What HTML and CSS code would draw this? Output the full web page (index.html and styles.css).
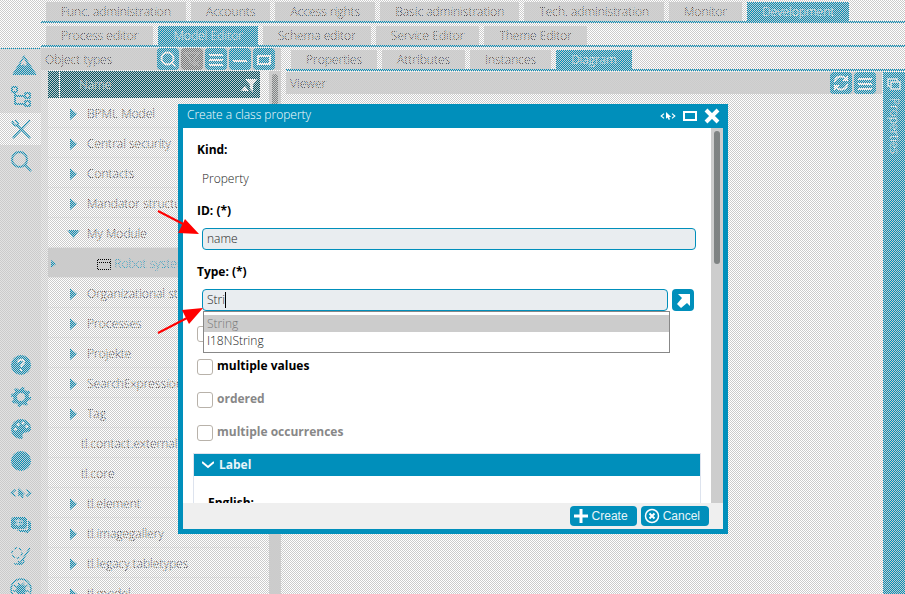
FILE: index.html
```html
<!DOCTYPE html>
<html lang="en">
<head>
<meta charset="utf-8">
<title>Model Editor</title>
<link rel="stylesheet" href="styles.css">
</head>
<body>
<svg class="defs" aria-hidden="true">
  <symbol id="i-search" viewBox="0 0 22 22"><circle cx="10.500" cy="10.500" r="6" fill="none" stroke="currentColor" stroke-width="2"/><path d="M15 15 18.500 18.500" stroke="currentColor" stroke-width="2"/></symbol>
  <symbol id="i-lines" viewBox="0 0 22 22"><path d="M4 7h14M4 12h14M4 17h14" stroke="currentColor" stroke-width="2"/></symbol>
  <symbol id="i-cursor" viewBox="0 0 20 20"><path d="M5 7 1.500 10 5 13M15 7l3.500 3L15 13" fill="none" stroke="currentColor" stroke-width="1.500"/><path d="M7.500 5v8.500l2-1.500 1.500 3 1.500-1-1.200-2.600H14z" fill="currentColor"/></symbol>
</svg>
<div class="app">
  <aside class="rail">
    <div class="rail-top"></div>
    <button class="rail-btn" aria-label="Home"><svg class="wide" viewBox="0 0 26 22"><path fill="currentColor" fill-rule="evenodd" d="M13 1 26 21H1zM13 4l-3 5v3l2-2 2 2 2-1z"/></svg></button>
    <button class="rail-btn" aria-label="Structure"><svg viewBox="0 0 22 22" fill="none" stroke="currentColor" stroke-width="2"><rect x="2" y="1" width="5" height="5" rx="1"/><rect x="15" y="7" width="5" height="5" rx="1"/><rect x="15" y="15" width="5" height="5" rx="1"/><path d="M5 6v12h10M5 10h10"/></svg></button>
    <button class="rail-btn current" aria-label="Tools"><svg viewBox="0 0 22 22" fill="none" stroke="currentColor" stroke-width="2"><path d="M3 20 20 2M7 7l13 13M2 3l2 4 3 1 1-3-3-3"/></svg></button>
    <button class="rail-btn" aria-label="Search"><svg viewBox="0 0 22 22" fill="none" stroke="currentColor" stroke-width="2"><circle cx="9.500" cy="9.500" r="7.500"/><path d="m15 15 6 6"/></svg></button>
    <div class="rail-low">
      <button class="rail-btn" aria-label="Help"><svg viewBox="0 0 22 22"><circle cx="11" cy="11" r="10" fill="currentColor"/><path d="M8 8.500c0-4 6.500-3.500 6 0-.5 2-3 2-3 4.500M11 15v2" stroke="#fff" stroke-width="2" fill="none"/></svg></button>
      <button class="rail-btn" aria-label="Settings"><svg viewBox="0 0 22 22" fill="none" stroke="currentColor"><circle cx="11" cy="11" r="6" stroke-width="4"/><circle cx="11" cy="11" r="8.500" stroke-width="3" stroke-dasharray="3 3.670"/></svg></button>
      <button class="rail-btn" aria-label="Theme"><svg viewBox="0 0 22 22"><path fill="currentColor" d="M11 1a10 10 0 1 0 0 20c3 0 1-3 1.500-5 1-3 8.500 0 8.500-5.500C21 5 16 1 11 1z"/><g fill="#fff"><circle cx="5.500" cy="11" r="1.500"/><circle cx="8" cy="6.500" r="1.500"/><circle cx="13" cy="5" r="1.500"/><circle cx="17" cy="8.500" r="1.500"/></g></svg></button>
      <button class="rail-btn" aria-label="Status"><svg viewBox="0 0 22 22"><circle cx="11" cy="11" r="10" fill="currentColor"/></svg></button>
      <button class="rail-btn" aria-label="Inspect"><svg><use href="#i-cursor"/></svg></button>
      <button class="rail-btn" aria-label="Messages"><svg viewBox="0 0 22 22"><path fill="currentColor" d="M3 3h12l2 2v8l-2 2H9l-2 2v-2H3l-2-2V5zM18 6l3 2v8l-3 2v2l-3-2H9v-2h9z"/><path d="M5 7h8M5 10h8M8 5v7" stroke="#fff"/></svg></button>
      <button class="rail-btn" aria-label="Edit"><svg viewBox="0 0 22 22" fill="none" stroke="currentColor" stroke-width="1.500"><circle cx="7" cy="7" r="5" stroke-dasharray="3 2"/><path d="m20 2-7 11M13 13l-3 4c3 1 5-1 3-4M4 18h8M8 15l2 4"/></svg></button>
      <button class="rail-btn" aria-label="Debug"><svg viewBox="0 0 22 22" fill="none" stroke="currentColor" stroke-width="1.500"><circle cx="11" cy="11" r="10"/><path fill="currentColor" d="M8 8h6l1 4-1 5H8l-1-5z"/><path d="M4 7l4 3M18 7l-4 3M3 13h4M15 13h4M8 5l3 3 3-3"/></svg></button>
    </div>
  </aside>
  <div class="main">
    <nav class="tabs"><a href="#">Func. administration</a><a href="#">Accounts</a><a href="#">Access rights</a><a href="#">Basic administration</a><a href="#">Tech. administration</a><a href="#">Monitor</a><a href="#" class="active">Development</a></nav>
    <nav class="tabs"><a href="#">Process editor</a><a href="#" class="active">Model Editor</a><a href="#">Schema editor</a><a href="#">Service Editor</a><a href="#">Theme Editor</a></nav>
    <div class="work">
      <section class="tree">
        <header class="bar"><span>Object types</span>
          <span class="tools">
            <button aria-label="Search"><svg><use href="#i-search"/></svg></button>
            <button aria-label="Filter" disabled><svg viewBox="0 0 22 22"><path d="M4 5h14l-5 6v6l-4-3v-3zM13 13l5 5M18 13l-5 5" fill="none" stroke="#999" stroke-width="1.500"/></svg></button>
            <button aria-label="Menu"><svg><use href="#i-lines"/></svg></button>
            <button aria-label="Minimize"><svg viewBox="0 0 22 22"><path d="M4 13h14" stroke="#fff" stroke-width="2"/></svg></button>
            <button aria-label="Maximize"><svg viewBox="0 0 22 22"><path d="M5 8h12v8H5z" fill="none" stroke="#fff" stroke-width="2"/></svg></button>
          </span>
        </header>
        <div class="tree-body">
          <div class="grid">
            <div class="head"><span>Name</span><svg viewBox="0 0 18 16"><path fill="#fff" d="M1 14 5 9l4 5zM5 2h12l-4 6v7l-3-3V8z"/></svg></div>
            <ul>
              <li><i class="tri"></i>BPML Model</li>
              <li><i class="tri"></i>Central security</li>
              <li><i class="tri"></i>Contacts</li>
              <li><i class="tri"></i>Mandator structure</li>
              <li><i class="tri open"></i>My Module</li>
              <li class="sel"><i class="tri small"></i><svg viewBox="0 0 14 11"><path d="M.5.5h13v10H.5zM.5 3.500h13" fill="none" stroke="#000"/></svg>Robot system</li>
              <li><i class="tri"></i>Organizational structures</li>
              <li><i class="tri"></i>Processes</li>
              <li><i class="tri"></i>Projekte</li>
              <li><i class="tri"></i>SearchExpression</li>
              <li><i class="tri"></i>Tag</li>
              <li class="leaf">tl.contact.external</li>
              <li class="leaf">tl.core</li>
              <li><i class="tri"></i>tl.element</li>
              <li><i class="tri"></i>tl.imagegallery</li>
              <li><i class="tri"></i>tl.legacy.tabletypes</li>
              <li><i class="tri"></i>tl.model</li>
            </ul>
          </div>
          <div class="track"><div class="thumb"></div></div>
        </div>
      </section>
      <section class="detail">
        <nav class="tabs"><a href="#">Properties</a><a href="#">Attributes</a><a href="#">Instances</a><a href="#" class="active">Diagram</a></nav>
        <div class="view">
          <div class="canvas"><header class="bar"><span>Viewer</span><span class="tools">
            <button aria-label="Refresh"><svg viewBox="0 0 22 22" fill="none" stroke="#fff" stroke-width="2"><path d="M5 10c0-6 8-7 11-3M17 12c0 6-8 7-11 3M17 4v4h-4M5 18v-4h4"/></svg></button>
            <button aria-label="Menu"><svg><use href="#i-lines"/></svg></button></span></header></div>
          <aside class="side"><svg viewBox="0 0 14 12" fill="none" stroke="#fff" stroke-width="1.500"><path d="M3 8H1V1h9v2M4 4h9v7H4z"/></svg><span>Properties</span></aside>
        </div>
      </section>
    </div>
  </div>
</div>
<div class="veil"></div>
<div class="dialog" role="dialog" aria-labelledby="dlg-title">
  <header class="title"><span id="dlg-title">Create a class property</span>
    <button aria-label="Inspect"><svg viewBox="0 0 20 20"><use href="#i-cursor"/></svg></button>
    <button aria-label="Maximize"><svg viewBox="0 0 16 16"><path d="M2 4h12v8H2z" fill="none" stroke="#fff" stroke-width="2"/></svg></button>
    <button aria-label="Close"><svg viewBox="0 0 16 16"><path d="m2 2 12 12M14 2 2 14" stroke="#fff" stroke-width="4"/></svg></button>
  </header>
  <div class="content">
    <form class="form" id="f">
      <div class="field"><b>Kind:</b><div class="control text">Property</div></div>
      <div class="field"><label for="id">ID: (*)</label><div class="control"><input id="id" type="text" value="name"></div></div>
      <div class="field"><label for="type">Type: (*)</label>
        <div class="control"><span class="combo"><input id="type" type="text" value="Stri"><i class="caret"></i>
          <ul class="popup"><li class="on">String</li><li>I18NString</li></ul></span>
          <button type="button" class="pick" aria-label="Choose type"><svg viewBox="0 0 22 22"><path fill="#fff" d="M6 5h12v12l-3-3-6 5-4-4 5-6z"/></svg></button>
        </div>
      </div>
      <div class="check"><input type="checkbox" id="c0" aria-label="mandatory"></div>
      <div class="check"><input type="checkbox" id="c1"><label for="c1">multiple values</label></div>
      <div class="check off"><input type="checkbox" id="c2" disabled><label for="c2">ordered</label></div>
      <div class="check off"><input type="checkbox" id="c3" disabled><label for="c3">multiple occurrences</label></div>
      <section class="group"><h2><svg viewBox="0 0 12 8"><path d="m0 1 6 5 6-5" fill="none" stroke="#fff" stroke-width="2"/></svg>Label</h2><label for="en">English:</label><input id="en" type="text"></section>
    </form>
    <div class="track"><div class="thumb"></div></div>
  </div>
  <footer>
    <button type="submit" form="f"><svg viewBox="0 0 16 16"><path d="M8 1v14M1 8h14" stroke="#fff" stroke-width="3"/></svg>Create</button>
    <button type="button"><svg viewBox="0 0 16 16" fill="none" stroke="#fff"><circle cx="8" cy="8" r="6.500" stroke-width="1.500"/><path d="m5.500 5.500 5 5M10.500 5.500l-5 5" stroke-width="2"/></svg>Cancel</button>
  </footer>
</div>
<svg class="arrows" viewBox="0 0 48 126" aria-hidden="true"><path d="M1 1 30 16M1 123 30 108" stroke="red" stroke-width="2"/><path fill="red" d="m42 24-21-1 7-14zM46 98l-14 16-7-14z"/></svg>
</body>
</html>
```
FILE: styles.css
```css
* { box-sizing: border-box; }
html, body { height: 100%; }
body { margin: 0; overflow: hidden; background: #fff; color: #222; font: 300 12px/18px "Open Sans", sans-serif; }
button, input { font: inherit; color: inherit; padding: 0; border: 0; margin: 0; }
button { background: none; }
svg { display: block; }
ul { list-style: none; margin: 0; padding: 0; }
a { color: inherit; text-decoration: none; }
.defs { position: absolute; width: 0; height: 0; }

.app { display: flex; height: 100vh; overflow: hidden; }
.rail { width: 41px; flex: none; color: #008fbb; background: #e2e2e2; }
.rail-top { height: 49px; background: #fff; border-bottom: 1px solid #008fbb; }
.rail-btn { display: flex; width: 100%; height: 32px; align-items: center; justify-content: center; }
.rail-btn svg { width: 22px; height: 22px; }
.rail-btn .wide { width: 26px; margin-left: 6px; }
.rail-btn.current { background: #fff; }
.rail-low { margin-top: 172px; }

.main { flex: 1; min-width: 0; display: flex; flex-direction: column; }
.tabs { display: flex; flex: none; gap: 5px; height: 23px; padding: 2px 0 0 5px; margin-bottom: 1px; border-bottom: 2px solid #008fbb; }
.tabs a { padding: 0 15px; line-height: 19px; background: #d2d2d2; white-space: nowrap; }
.tabs .active { background: #008fbb; color: #fff; }
.work { flex: 1; min-height: 0; display: flex; }
.tree { width: 240px; flex: none; display: flex; flex-direction: column; margin-right: 5px; }
.bar { display: flex; justify-content: space-between; flex: none; height: 22px; line-height: 24px; padding: 0 6px 0 4px; background: #d2d2d2; }
.tools { display: flex; gap: 2px; color: #fff; }
.tools button { width: 22px; height: 22px; border-radius: 4px; background: #008fbb; }
.tools button:disabled { background: #777; }
.tools svg { width: 22px; height: 22px; }
.tree-body { flex: 1; min-height: 0; display: flex; padding-top: 1px; border-left: 7px solid #ececec; }
.grid { flex: 1; min-width: 0; margin-right: 9px; overflow: hidden; }
.head { display: flex; align-items: center; justify-content: space-between; height: 27px; background: #005566; color: #fff; padding: 0 2px 0 19px; margin-left: 12px; box-shadow: -1px 0 #fff, -12px 0 #005566; }
.head svg { width: 18px; height: 16px; }
.grid li { display: flex; align-items: center; height: 30px; padding: 3px 0 0 22px; border-bottom: 1px solid #ececec; white-space: nowrap; }
.grid .leaf { padding-left: 33px; }
.grid .sel { background: #ccc; color: #008fbb; padding-left: 3px; }
.sel svg { width: 14px; height: 11px; margin: 0 3px 0 41px; }
.tri { flex: none; width: 7px; height: 12px; margin-right: 10px; background: #008fbb; clip-path: polygon(0 0, 100% 50%, 0 100%); }
.tri.open { width: 13px; height: 9px; margin: 0 7px 0 -3px; clip-path: polygon(0 0, 100% 0, 50% 100%); }
.tri.small { width: 5px; height: 8px; margin: 0; }
.track { width: 12px; flex: none; background: #cdcdcd; padding: 3px 3px 0; }
.thumb { height: 133px; border-radius: 3px; background: #7f8383; }
.detail { flex: 1; min-width: 0; display: flex; flex-direction: column; }
.view { flex: 1; display: flex; gap: 1px; }
.canvas { flex: 1; }
.side { width: 22px; background: #008fbb; color: #fff; }
.side svg { width: 14px; height: 12px; margin: 6px 4px 8px; }
.side span { writing-mode: vertical-rl; line-height: 22px; }

.veil { position: absolute; inset: 0; background: repeating-conic-gradient(transparent 0 25%, #cbcbcb 0 50%) 0 0 / 2px 2px; }

.dialog { position: absolute; inset: 104px 177px 60px 178px; display: flex; flex-direction: column; background: #008fbb; padding: 0 5px 5px; }
.title { display: flex; align-items: center; gap: 6px; height: 24px; flex: none; color: #fff; padding: 0 3px 0 4px; }
.title span { flex: 1; padding-bottom: 2px; }
.title svg { width: 16px; height: 16px; }
.content { flex: 1; min-height: 0; display: flex; background: #fff; }
.form { flex: 1; min-width: 0; overflow: hidden; padding: 12px 10px 0 14px; }
b, .form label, h2 { font-size: 12px; font-weight: 700; color: #000; }
.field { margin-bottom: 12px; }
.field b, .field label { display: block; height: 18px; line-height: 20px; }
.control { display: flex; gap: 4px; margin-top: 9px; padding: 0 5px; height: 22px; }
.text { line-height: 24px; }
.control input { width: 100%; height: 22px; padding: 0 4px 2px; background: #e9edf0; border: 1px solid #008fbb; border-radius: 4px; outline: 0; }
.combo { position: relative; flex: 1; }
.caret { position: absolute; left: 23px; top: 3px; width: 1px; height: 16px; background: #000; }
.pick { width: 22px; height: 22px; margin-right: 2px; border-radius: 4px; background: #008fbb; }
.popup { position: absolute; top: 22px; left: 1px; right: -2px; padding: 3px 0; border: 1px solid #888; background: #fff; }
.popup li { padding: 0 3px; line-height: 17px; }
.popup .on { background: #ccc; color: #777; }
.check { display: flex; align-items: center; gap: 4px; height: 22px; margin-bottom: 11px; }
.check input { appearance: none; width: 16px; height: 16px; border: 1px solid #b8b2aa; border-radius: 3px; background: #fff; }
.check label { padding-bottom: 2px; }
.form .off label { color: #888; }
.group { margin: -2px 0 0 -4px; border: 1px solid #dde3ee; }
h2 { display: flex; align-items: center; gap: 5px; height: 22px; margin: 0; padding-left: 8px; }
.form h2 { background: #008fbb; color: #e9f5f9; }
h2 svg { width: 12px; height: 8px; }
.group label { display: block; padding: 18px 14px 9px; }
.dialog footer { display: flex; justify-content: flex-end; gap: 4px; height: 26px; flex: none; padding: 3px 14px; background: #efefef; }
footer button { display: flex; align-items: center; gap: 3px; height: 20px; padding: 0 9px 0 3px; border-radius: 4px; background: #008fbb; color: #e9f5f9; font: 12px/22px "Liberation Sans", sans-serif; }
footer svg { width: 16px; height: 16px; }
.arrows { position: absolute; left: 157px; top: 210px; width: 48px; height: 126px; }
```
